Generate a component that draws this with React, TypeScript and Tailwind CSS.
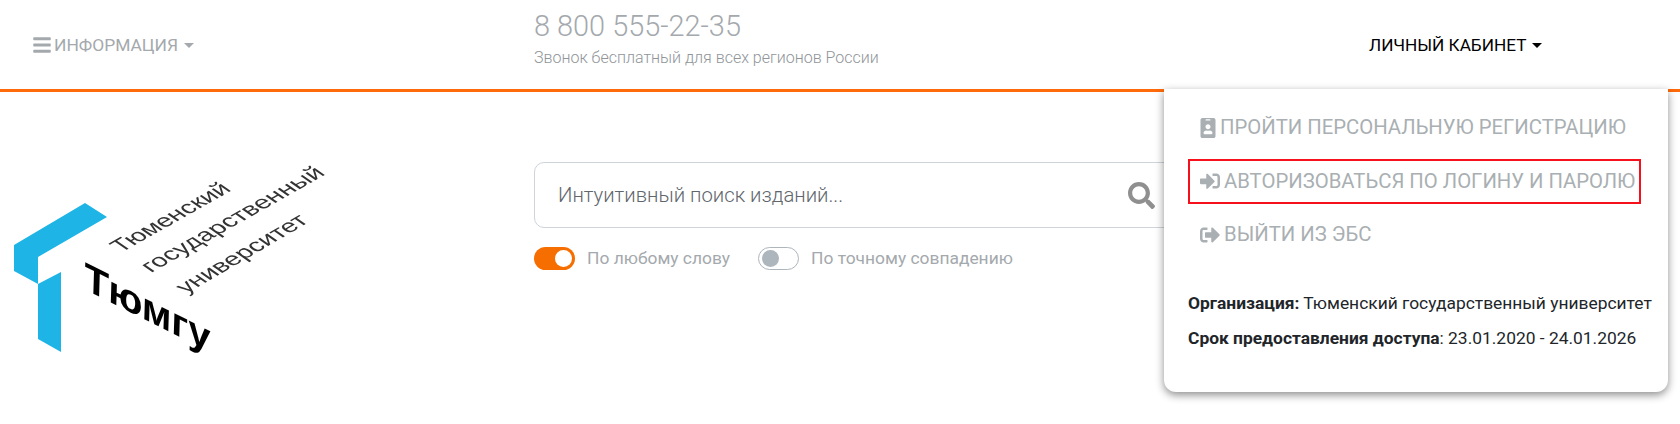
import { FaBars, FaIdBadge, FaSearch, FaSignInAlt, FaSignOutAlt } from 'react-icons/fa';

function Caret({ className }: { className: string }) {
  return <span className={`ml-[6px] inline-block h-0 w-0 border-x-[5px] border-t-[5px] border-x-transparent ${className}`} />;
}

function Logo() {
  return (
    <svg width="370" height="250" viewBox="0 0 370 250" className="block blur-[0.5px]">
      <polygon points="85,63 107,77 38,117 38,144 14,131 14,105" fill="#1fb4e6" />
      <polygon points="61,132 61,212 38,199 38,144" fill="#1fb4e6" />
      <g fontFamily="'Liberation Sans', sans-serif" fontSize="20" fill="#333">
        <text transform="matrix(1.08 -0.61 0.95 0.66 121 113)">Тюменский</text>
        <text transform="matrix(1.1 -0.62 0.95 0.66 151 133)">государственный</text>
        <text transform="matrix(1.08 -0.63 0.95 0.66 186 154)">университет</text>
      </g>
      <text transform="matrix(1 0.5 -0.03 0.98 84 149)" fontFamily="'Liberation Sans', sans-serif" fontSize="40" fontWeight="700" fill="#000">Тюмгу</text>
    </svg>
  );
}

function Toggle({ on, label }: { on: boolean; label: string }) {
  return (
    <div className="flex items-center">
      {on ? (
        <span className="flex h-[23px] w-[41px] items-center justify-end rounded-full bg-[#f76e00] pr-[3px]">
          <span className="h-[17px] w-[17px] rounded-full bg-white" />
        </span>
      ) : (
        <span className="flex h-[23px] w-[41px] items-center rounded-full border border-[#adb5bd] bg-white pl-[3px]">
          <span className="h-[17px] w-[17px] rounded-full bg-[#adb5bd]" />
        </span>
      )}
      <span className="ml-[12px] text-[17.4px] text-[#a4a9ad]">{label}</span>
    </div>
  );
}

function MenuItem({ icon, label, outlined }: { icon: React.ReactNode; label: string; outlined?: boolean }) {
  return (
    <div className={`flex h-[45px] w-[453px] items-center gap-[4px] border-2 pl-[10px] text-[20.3px] whitespace-nowrap text-[#a9afb2] ${outlined ? 'border-[#f5101c]' : 'border-transparent'}`}>
      {icon}
      <span>{label}</span>
    </div>
  );
}

export default function App() {
  return (
    <div className="relative h-[424px] w-[1680px] overflow-hidden bg-white font-['Roboto','Noto_Sans',sans-serif]">
      <header className="flex h-[92px] items-center border-b-[3px] border-[#ff6a0a] bg-white">
        <div className="mt-[2px] flex w-[534px] items-center pl-[32px] text-[17.4px] text-[#a4a9ad]">
          <FaBars className="mr-[2px] text-[20px]" />
          <span>ИНФОРМАЦИЯ</span>
          <Caret className="border-t-[#a4a9ad]" />
        </div>
        <div className="w-[835px] pb-[14px]">
          <div className="text-[28.9px] leading-[36px] font-light text-[#a4a9ad]">8 800 555-22-35</div>
          <div className="mt-[4px] text-[16px] leading-[20px] font-light text-[#8f9599]">Звонок бесплатный для всех регионов России</div>
        </div>
        <div className="mt-[2px] flex items-center text-[17.2px] text-black">
          <span>ЛИЧНЫЙ КАБИНЕТ</span>
          <Caret className="border-t-black" />
        </div>
      </header>

      <main className="flex">
        <div className="mt-[48px] w-[534px]">
          <Logo />
        </div>
        <div className="pt-[70px]">
          <div className="flex h-[66px] w-[700px] items-center rounded-[10px] border border-[#ced4da] pl-[23px] text-[20.3px] font-light text-[#5f666c]">
            <span className="w-[570px]">Интуитивный поиск изданий...</span>
            <FaSearch className="text-[27px] text-[#8f8f8f]" />
          </div>
          <div className="mt-[17px] flex gap-[28px]">
            <Toggle on label="По любому слову" />
            <Toggle on={false} label="По точному совпадению" />
          </div>
        </div>
      </main>

      {/* dropdown over the page */}
      <div className="absolute top-[89px] left-[1164px] h-[303px] w-[504px] rounded-b-[12px] bg-white pt-[16px] pl-[24px] shadow-[0_3px_8px_rgba(0,0,0,0.45)]">
        <div className="flex flex-col gap-[8.5px]">
          <MenuItem icon={<FaIdBadge className="-mr-[2px] -ml-[2px] text-[20px]" />} label="ПРОЙТИ ПЕРСОНАЛЬНУЮ РЕГИСТРАЦИЮ" />
          <MenuItem outlined icon={<FaSignInAlt className="text-[20px]" />} label="АВТОРИЗОВАТЬСЯ ПО ЛОГИНУ И ПАРОЛЮ" />
          <MenuItem icon={<FaSignOutAlt className="text-[20px]" />} label="ВЫЙТИ ИЗ ЭБС" />
        </div>
        <div className="mt-[34px] text-[17.4px] leading-[24px] text-[#212529]">
          <p><b>Организация:</b> Тюменский государственный университет</p>
          <p className="mt-[11px]"><b>Срок предоставления доступа</b>: 23.01.2020 - 24.01.2026</p>
        </div>
      </div>
    </div>
  );
}
